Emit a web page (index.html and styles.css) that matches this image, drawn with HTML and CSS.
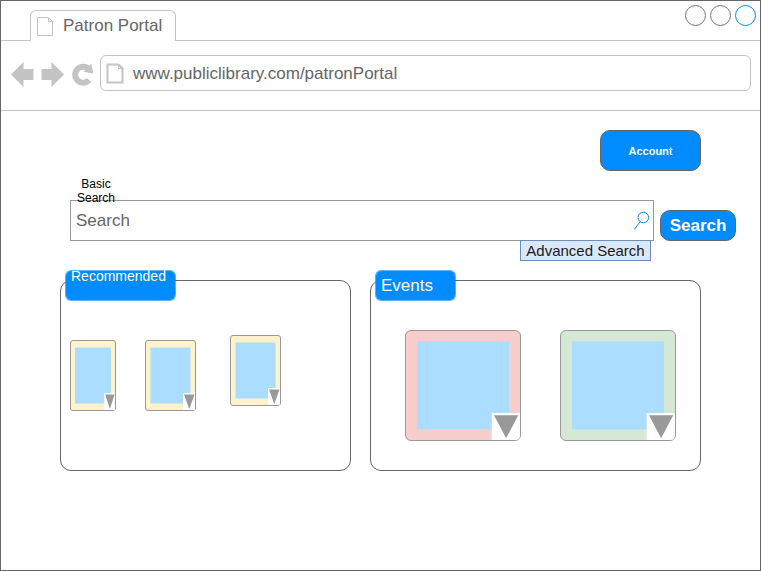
FILE: index.html
```
<!DOCTYPE html>
<html lang="en">
<head>
<meta charset="utf-8">
<title>Patron Portal</title>
<link rel="stylesheet" href="styles.css">
</head>
<body>
<div class="window">
  <header class="tabbar">
    <div class="tab">
      <svg class="tab-icon" width="17" height="20" viewBox="0 0 17 20"><path d="M.5.5H11.5L15.5 4.5V18.5H.5ZM11.5.5V4.5H15.5"/></svg>
      <span>Patron Portal</span>
    </div>
    <div class="controls"><i class="dot"></i><i class="dot"></i><i class="dot active"></i></div>
  </header>
  <nav class="toolbar">
    <svg class="nav-icons" width="84" height="26" viewBox="0 0 84 26">
      <path d="M0 12.5L12.5 0V7H22.5V18H12.5V25Z"/>
      <path d="M53 12.5L40.5 0V7H30.500V18H40.500V25Z"/>
      <path class="reload" d="M78.100 18.100A8 8 0 1 1 77.200 6.500"/>
      <path d="M80.300 1.800L82.300 11.500L72.500 9.700Z"/>
    </svg>
    <div class="address">
      <svg class="page-icon" width="19" height="21" viewBox="0 0 19 21"><path d="M1.500 1.500H12.500L16.500 5.500V19.500H1.500Z"/><path class="fold" d="M12.500 1.500V5.500H16.500"/></svg>
      <span>www.publiclibrary.com/patronPortal</span>
    </div>
  </nav>
  <main class="page">
    <button class="btn account">Account</button>
    <div class="search-row">
      <div class="field">
        <span class="field-label">Basic Search</span>
        <span>Search</span>
        <svg class="lens" width="17" height="20" viewBox="0 0 17 20"><circle cx="10.300" cy="6.500" r="5.300"/><path d="M7 10.800L1.300 18.500"/></svg>
      </div>
      <button class="btn go">Search</button>
    </div>
    <a class="advanced">Advanced Search</a>
    <div class="panels">
      <section class="panel recommended">
        <h2 class="badge">Recommended</h2>
        <svg class="card cream" width="46" height="71"><rect class="frame" x=".5" y=".5" width="45" height="70" rx="2.500"/><rect class="image" x="5" y="7.500" width="36" height="56"/><path class="corner" d="M34.200 53H45V68.500Q45 70 43.500 70H34.200Z"/><path class="arrow" d="M35.200 54.400H44.600L39.900 69.100Z"/></svg>
        <svg class="card cream" width="51" height="71"><rect class="frame" x=".5" y=".5" width="50" height="70" rx="2.500"/><rect class="image" x="5.500" y="7.500" width="40" height="56"/><path class="corner" d="M38 53H50V68.500Q50 70 48.500 70H38Z"/><path class="arrow" d="M39 54.400H49.500L44.250 69.100Z"/></svg>
        <svg class="card cream raised" width="51" height="71"><rect class="frame" x=".5" y=".5" width="50" height="70" rx="2.500"/><rect class="image" x="5.500" y="7.500" width="40" height="56"/><path class="corner" d="M38 53H50V68.500Q50 70 48.500 70H38Z"/><path class="arrow" d="M39 54.400H49.500L44.250 69.100Z"/></svg>
      </section>
      <section class="panel events">
        <h2 class="badge">Events</h2>
        <svg class="card pink" width="116" height="111"><rect class="frame" x=".5" y=".5" width="115" height="110" rx="5.500"/><rect class="image" x="12" y="11.500" width="92" height="88"/><path class="corner" d="M86.700 83H115V105Q115 110 110 110H86.700Z"/><path class="arrow" d="M89 85.200H113.200L101.100 108.300Z"/></svg>
        <svg class="card green" width="116" height="111"><rect class="frame" x=".5" y=".5" width="115" height="110" rx="5.500"/><rect class="image" x="12" y="11.500" width="92" height="88"/><path class="corner" d="M86.700 83H115V105Q115 110 110 110H86.700Z"/><path class="arrow" d="M89 85.200H113.200L101.100 108.300Z"/></svg>
      </section>
    </div>
  </main>
</div>
</body>
</html>
```
FILE: styles.css
```
* { box-sizing: border-box; }
body { margin: 0; background: #fff; font: 17px/20px "Liberation Sans", Arial, sans-serif; color: #666; }
svg { display: block; flex: none; }

.window { width: 761px; height: 571px; border: 1px solid #666; overflow: hidden; }

.tabbar { display: flex; justify-content: space-between; height: 40px; padding-left: 29px; border-bottom: 1px solid #c4c4c4; }
.tab { display: flex; width: 146px; height: 31px; margin-top: 9px; padding-left: 6px; background: #fff; border: 1px solid #c4c4c4; border-bottom: 0; border-radius: 6px 6px 0 0; }
.tab span { margin: 5px 0 0 9px; white-space: nowrap; }
.tab-icon { margin-top: 6px; fill: none; stroke: #c4c4c4; }
.controls { display: flex; gap: 4px; padding: 4px 4px 0 0; }
.dot { width: 21px; height: 21px; border: 1px solid #777; border-radius: 50%; }
.dot.active { border-color: #008cff; }

.toolbar { display: flex; height: 70px; padding: 14px 9px 0 10px; border-bottom: 1px solid #c4c4c4; }
.nav-icons { margin-top: 7px; margin-right: 5px; fill: #c4c4c4; }
.nav-icons .reload { fill: none; stroke: #c4c4c4; stroke-width: 6; }
.address { display: flex; flex: 1; height: 36px; padding-left: 5px; border: 1px solid #c4c4c4; border-radius: 6px; }
.address span { margin: 8px 0 0 8px; }
.page-icon { margin-top: 7px; fill: none; stroke: #c4c4c4; stroke-width: 2; }
.page-icon .fold { stroke-width: 1; }

.page { display: flex; flex-direction: column; padding: 19px 24px 0 59px; }
.btn { padding: 0; border: 1px solid #666; border-radius: 10px; background: #008cff; color: #fff; font: bold 17px/20px "Liberation Sans", Arial, sans-serif; }
.account { align-self: flex-end; width: 101px; height: 41px; margin-right: 35px; font-size: 11px; }
.search-row { display: flex; gap: 6px; margin: 29px 0 0 10px; }
.field { position: relative; display: flex; justify-content: space-between; width: 584px; height: 41px; padding: 10px 3px 0 5px; border: 1px solid #999; }
.field-label { position: absolute; left: 0; top: -24px; width: 50px; color: #000; font-size: 12px; line-height: 14px; text-align: center; }
.lens { fill: none; stroke: #008cff; }
.go { width: 76px; height: 31px; margin-top: 10px; }
.advanced { width: 131px; height: 21px; margin: -1px 0 0 460px; border: 1px solid #6c8ebf; background: #dae8fc; color: #1a1a1a; font-size: 15px; line-height: 20px; text-align: center; position: relative; }

.panels { display: flex; gap: 19px; margin-top: 19px; }
.panel { position: relative; display: flex; align-items: flex-start; height: 191px; border: 1px solid #666; border-radius: 11px; }
.recommended { width: 291px; padding: 59px 0 0 9px; }
.recommended .card + .card { margin-left: 29px; }
.recommended .raised.card { margin: -5px 0 0 34px; }
.events { width: 331px; gap: 39px; padding: 49px 0 0 34px; }
.badge { position: absolute; left: 4px; top: -11px; height: 31px; margin: 0; padding-left: 5px; border: 1px solid rgba(0, 140, 255, .65); border-radius: 6px; background: #008cff; background-clip: padding-box; color: #fff; font-weight: normal; }
.recommended .badge { width: 111px; font-size: 14px; line-height: 11px; }
.events .badge { width: 81px; font-size: 17px; line-height: 30px; }

.frame { stroke: #999; }
.cream .frame { fill: #fff2cc; }
.pink .frame { fill: #f8cecc; }
.green .frame { fill: #d5e8d4; }
.image { fill: #aaddff; }
.corner { fill: #fff; }
.arrow { fill: #999; }
```
